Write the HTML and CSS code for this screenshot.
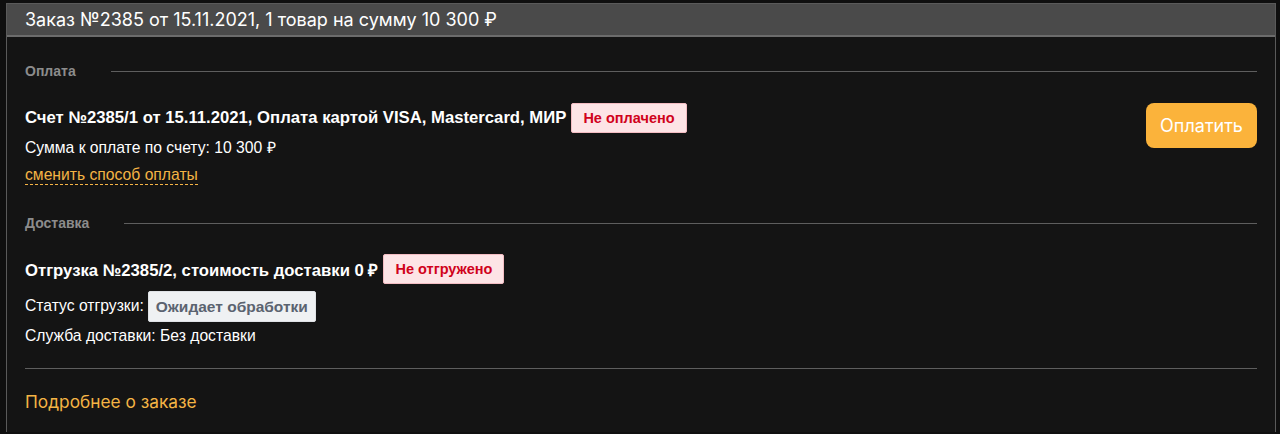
FILE: index.html
```html
<!DOCTYPE html>
<html lang="ru">
<head>
    <meta charset="UTF-8">
    <meta name="viewport" content="width=device-width, initial-scale=1.0">
    <title>Заказ №2385</title>
    <link rel="stylesheet" href="styles.css">
</head>
<body>

    <div class="order-card">
        <div class="order-header">Заказ №2385 от 15.11.2021, 1 товар на сумму 10 300 ₽</div>
        <div class="order-body">

            <div class="section-title"><span>Оплата</span></div>
            <div class="payment-row">
                <div class="payment-info">
                    <div class="item-title">
                        Счет №2385/1 от 15.11.2021, Оплата картой VISA, Mastercard, МИР
                        <span class="badge badge-danger">Не оплачено</span>
                    </div>
                    <div class="item-line">Сумма к оплате по счету: 10 300 ₽</div>
                    <div class="item-line"><a href="#" class="dashed-link">сменить способ оплаты</a></div>
                </div>
                <button class="pay-button">Оплатить</button>
            </div>

            <div class="section-title"><span>Доставка</span></div>
            <div class="item-title">
                Отгрузка №2385/2, стоимость доставки 0 ₽
                <span class="badge badge-danger">Не отгружено</span>
            </div>
            <div class="item-line status-line">Статус отгрузки: <span class="badge badge-light">Ожидает обработки</span></div>
            <div class="item-line">Служба доставки: Без доставки</div>

            <div class="order-footer">
                <a href="#" class="more-link">Подробнее о заказе</a>
            </div>
        </div>
    </div>

</body>
</html>
```

FILE: styles.css
```css
body {
    margin: 0;
    padding: 3px 4px 0 6px;
    background-color: #0f0f0f;
    font-family: 'Liberation Sans', Arial, sans-serif;
    color: #fff;
}
.order-card {
    border: 1px solid #5a5a5a;
    border-bottom: none;
    background-color: #141414;
}
.order-header {
    background-color: #4a4a4a;
    border-bottom: 2px solid #6c6c6c;
    padding: 5px 18px 5px;
    font-family: 'Inter', 'Liberation Sans', sans-serif;
    font-size: 18px;
    line-height: 21px;
}
.order-body {
    padding: 23px 18px 20px;
}
.section-title {
    display: flex;
    align-items: center;
    gap: 35px;
    font-size: 14px;
    font-weight: bold;
    color: #8c8c8c;
    height: 22px;
}
.section-title::after {
    content: "";
    flex: 1;
    height: 1px;
    background-color: #5e5e5e;
}
.payment-row {
    display: flex;
    justify-content: space-between;
    align-items: flex-start;
    margin-top: 21px;
    margin-bottom: 23px;
}
.item-title {
    font-size: 16.7px;
    font-weight: bold;
    display: flex;
    align-items: center;
    gap: 5px;
    height: 30px;
}
.section-title + .item-title {
    margin-top: 20px;
}
.item-line {
    font-size: 15.7px;
    height: 28px;
    display: flex;
    align-items: center;
    gap: 4px;
}
.status-line {
    height: 32px;
    margin-top: 6px;
}
.badge {
    display: inline-block;
    padding: 6px 11px 5px;
    border-radius: 2px;
    font-size: 14.5px;
    font-weight: bold;
    line-height: 17px;
}
.badge-danger {
    background-color: #fde4e6;
    border: 1px solid #f3bcc2;
    color: #d0021b;
}
.badge-light {
    background-color: #eff1f3;
    border: 1px solid #dfe2e6;
    color: #5b6370;
    font-size: 15.5px;
    padding: 6px 7px;
}
.dashed-link {
    color: #f5b445;
    text-decoration: none;
    border-bottom: 1px dashed #f5b445;
    line-height: 18px;
}
.pay-button {
    background-color: #fbb33b;
    color: #fff;
    border: none;
    border-radius: 8px;
    font-family: 'Inter', 'Liberation Sans', sans-serif;
    font-size: 18px;
    width: 111px;
    height: 45px;
    cursor: pointer;
}
.order-footer {
    border-top: 1px solid #5e5e5e;
    margin-top: 18px;
    padding-top: 22px;
}
.more-link {
    color: #f5b445;
    text-decoration: none;
    font-family: 'Inter', 'Liberation Sans', sans-serif;
    font-size: 17.3px;
}
```
